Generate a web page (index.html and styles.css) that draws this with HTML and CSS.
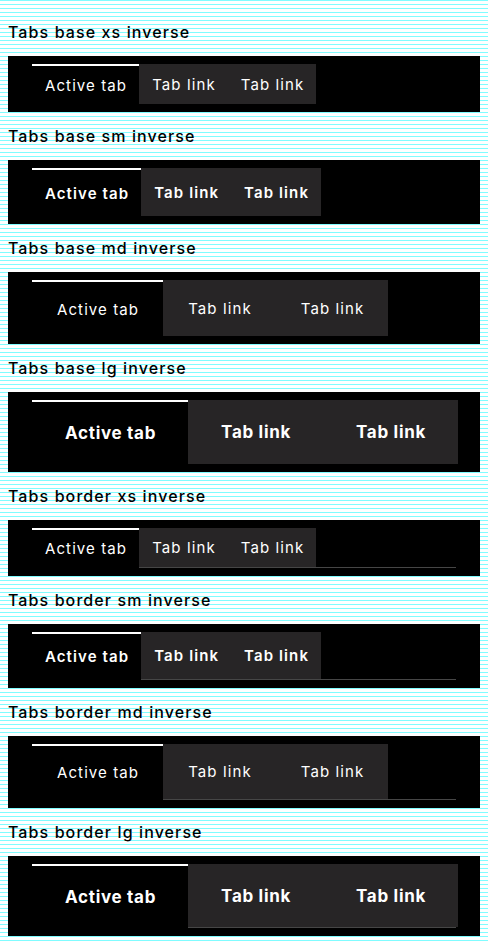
FILE: index.html
```html
<!DOCTYPE html>
<html lang="en">
<head>
    <meta charset="UTF-8">
    <meta name="viewport" content="width=device-width, initial-scale=1.0">
    <title>Tabs inverse</title>
    <link rel="stylesheet" href="styles.css">
</head>
<body>
    <div class="demo">
        <h2 class="demo-title">Tabs base xs inverse</h2>
        <div class="frame">
            <ul class="tabs tabs-xs">
                <li class="tab active">Active tab</li>
                <li class="tab">Tab link</li>
                <li class="tab">Tab link</li>
            </ul>
        </div>
    </div>

    <div class="demo">
        <h2 class="demo-title">Tabs base sm inverse</h2>
        <div class="frame">
            <ul class="tabs tabs-sm">
                <li class="tab active">Active tab</li>
                <li class="tab">Tab link</li>
                <li class="tab">Tab link</li>
            </ul>
        </div>
    </div>

    <div class="demo">
        <h2 class="demo-title">Tabs base md inverse</h2>
        <div class="frame">
            <ul class="tabs tabs-md">
                <li class="tab active">Active tab</li>
                <li class="tab">Tab link</li>
                <li class="tab">Tab link</li>
            </ul>
        </div>
    </div>

    <div class="demo">
        <h2 class="demo-title">Tabs base lg inverse</h2>
        <div class="frame">
            <ul class="tabs tabs-lg">
                <li class="tab active">Active tab</li>
                <li class="tab">Tab link</li>
                <li class="tab">Tab link</li>
            </ul>
        </div>
    </div>

    <div class="demo">
        <h2 class="demo-title">Tabs border xs inverse</h2>
        <div class="frame">
            <ul class="tabs tabs-xs tabs-border">
                <li class="tab active">Active tab</li>
                <li class="tab">Tab link</li>
                <li class="tab">Tab link</li>
            </ul>
        </div>
    </div>

    <div class="demo">
        <h2 class="demo-title">Tabs border sm inverse</h2>
        <div class="frame">
            <ul class="tabs tabs-sm tabs-border">
                <li class="tab active">Active tab</li>
                <li class="tab">Tab link</li>
                <li class="tab">Tab link</li>
            </ul>
        </div>
    </div>

    <div class="demo">
        <h2 class="demo-title">Tabs border md inverse</h2>
        <div class="frame">
            <ul class="tabs tabs-md tabs-border">
                <li class="tab active">Active tab</li>
                <li class="tab">Tab link</li>
                <li class="tab">Tab link</li>
            </ul>
        </div>
    </div>

    <div class="demo">
        <h2 class="demo-title">Tabs border lg inverse</h2>
        <div class="frame">
            <ul class="tabs tabs-lg tabs-border">
                <li class="tab active">Active tab</li>
                <li class="tab">Tab link</li>
                <li class="tab">Tab link</li>
            </ul>
        </div>
    </div>
</body>
</html>
```

FILE: styles.css
```css
body {
    margin: 8px;
    font-family: Inter, "Liberation Sans", sans-serif;
    color: #000000;
    background: repeating-linear-gradient(to bottom, #80fcff 0, #80fcff 1px, #ffffff 1px, #ffffff 4px);
}
.demo-title {
    margin: 0;
    height: 48px;
    line-height: 48px;
    font-size: 16px;
    font-weight: 500;
    letter-spacing: 1.1px;
}
.frame {
    background-color: #000000;
    padding: 8px 24px;
}
.tabs {
    display: flex;
    box-sizing: border-box;
    margin: 0;
    padding: 0;
    list-style: none;
}
.tab {
    display: flex;
    align-items: center;
    background-color: #272526;
    color: #FFFFFF;
    font-size: 15px;
    letter-spacing: 1.1px;
    white-space: nowrap;
}
.tab.active {
    background-color: #000000;
    border-top: 2px solid #FFFFFF;
}

/* sizes */
.tabs-xs {
    height: 40px;
}
.tabs-xs .tab {
    padding: 0 12px 0 13px;
}
.tabs-sm {
    height: 48px;
}
.tabs-sm .tab {
    padding: 0 12px 0 13px;
    font-weight: 600;
}
.tabs-md {
    height: 56px;
}
.tabs-md .tab {
    padding: 0 24px 0 25px;
}
.tabs-lg {
    height: 64px;
}
.tabs-lg .tab {
    padding: 0 32px 0 33px;
    font-size: 17px;
    font-weight: 700;
    letter-spacing: 0.7px;
}

/* border variant */
.tabs-border {
    border-bottom: 1px solid #464646;
}
.tabs-border .tab.active {
    border-bottom: 1px solid #000000;
    margin-bottom: -1px;
}
```
